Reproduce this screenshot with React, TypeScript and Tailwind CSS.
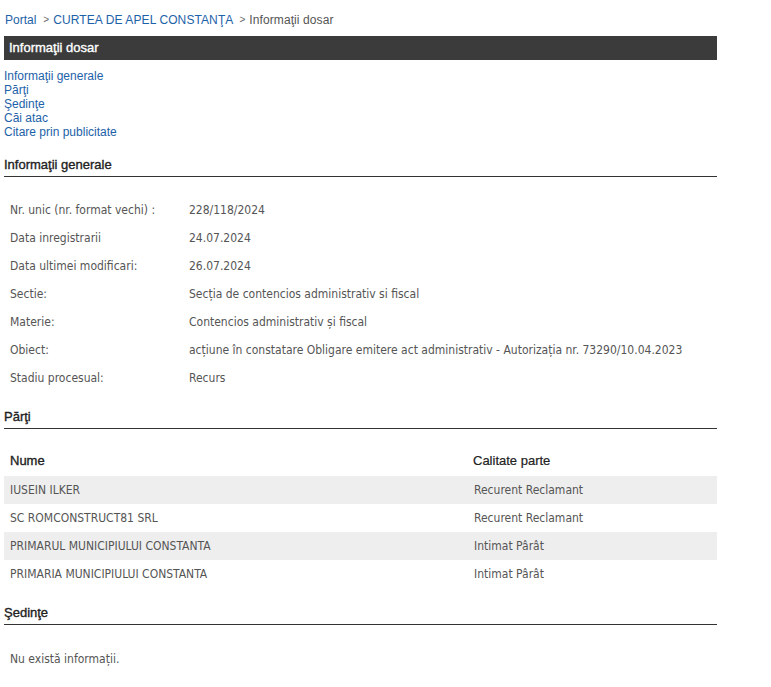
const info: [string, string][] = [
  ["Nr. unic (nr. format vechi) :", "228/118/2024"],
  ["Data inregistrarii", "24.07.2024"],
  ["Data ultimei modificari:", "26.07.2024"],
  ["Sectie:", "Secția de contencios administrativ si fiscal"],
  ["Materie:", "Contencios administrativ și fiscal"],
  ["Obiect:", "acțiune în constatare Obligare emitere act administrativ - Autorizația nr. 73290/10.04.2023"],
  ["Stadiu procesual:", "Recurs"],
];

const parti: [string, string][] = [
  ["IUSEIN ILKER", "Recurent Reclamant"],
  ["SC ROMCONSTRUCT81 SRL", "Recurent Reclamant"],
  ["PRIMARUL MUNICIPIULUI CONSTANTA", "Intimat Pârât"],
  ["PRIMARIA MUNICIPIULUI CONSTANTA", "Intimat Pârât"],
];

const body = "font-['DejaVu_Sans_Condensed',sans-serif] text-[12px]";

function SectionTitle({ children }: { children: React.ReactNode }) {
  return (
    <div className="text-[13px] text-[#222] [-webkit-text-stroke:0.35px] border-b border-[#333] h-[23px] flex items-center">
      {children}
    </div>
  );
}

export default function App() {
  return (
    <div className="bg-white w-[771px] min-h-[687px] font-['Liberation_Sans',Arial,sans-serif] text-[12px]">
      <div className="w-[713px] ml-[4px] pt-[13px]">
        <div className="h-[14px] leading-[14px] flex items-center pl-[1px]">
          <a className="text-[#1d62a8]">Portal</a>
          <span className="text-[#666] text-[10px] ml-[7px] mr-[4px]">&gt;</span>
          <a className="text-[#1d62a8] tracking-[0.1px]">CURTEA DE APEL CONSTANŢA</a>
          <span className="text-[#666] text-[10px] ml-[6px] mr-[4px]">&gt;</span>
          <span className="text-[#555] tracking-[0.1px]">Informaţii dosar</span>
        </div>
        <div className="mt-[9px] h-[24px] bg-[#3b3b3b] text-white text-[13px] [-webkit-text-stroke:0.35px] flex items-center pl-[5px]">
          Informaţii dosar
        </div>
        <div className="mt-[9px] flex flex-col leading-[14px] text-[#1d62a8]">
          <a>Informaţii generale</a>
          <a>Părţi</a>
          <a>Şedinţe</a>
          <a>Căi atac</a>
          <a>Citare prin publicitate</a>
        </div>

        <div className="mt-[15px]">
          <SectionTitle>Informaţii generale</SectionTitle>
        </div>
        <div className={`${body} text-[#555] mt-[19px] flex flex-col`}>
          {info.map(([k, v]) => (
            <div key={k} className="h-[28px] flex items-center pl-[6px]">
              <div className="w-[179px] shrink-0">{k}</div>
              <div>{v}</div>
            </div>
          ))}
        </div>

        <div className="mt-[14px]">
          <SectionTitle>Părţi</SectionTitle>
        </div>
        <table className={`${body} w-full mt-[17px] border-collapse`}>
          <thead>
            <tr className="h-[30px] text-[#222] font-['Liberation_Sans',Arial,sans-serif] text-[13px]">
              <th className="text-left font-normal pl-[6px] [-webkit-text-stroke:0.35px]">Nume</th>
              <th className="text-left font-normal w-[245px] pl-[1px] [-webkit-text-stroke:0.2px]">Calitate parte</th>
            </tr>
          </thead>
          <tbody className="text-[#555]">
            {parti.map(([n, c], i) => (
              <tr key={n} className={`h-[28px] ${i % 2 === 0 ? "bg-[#eeeeee]" : ""}`}>
                <td className="pl-[6px]">{n}</td>
                <td className="pl-[2px]">{c}</td>
              </tr>
            ))}
          </tbody>
        </table>

        <div className="mt-[14px]">
          <SectionTitle>Şedinţe</SectionTitle>
        </div>
        <div className={`${body} text-[#555] mt-[20px] pl-[6px] h-[28px] flex items-center`}>
          Nu există informații.
        </div>
      </div>
    </div>
  );
}
